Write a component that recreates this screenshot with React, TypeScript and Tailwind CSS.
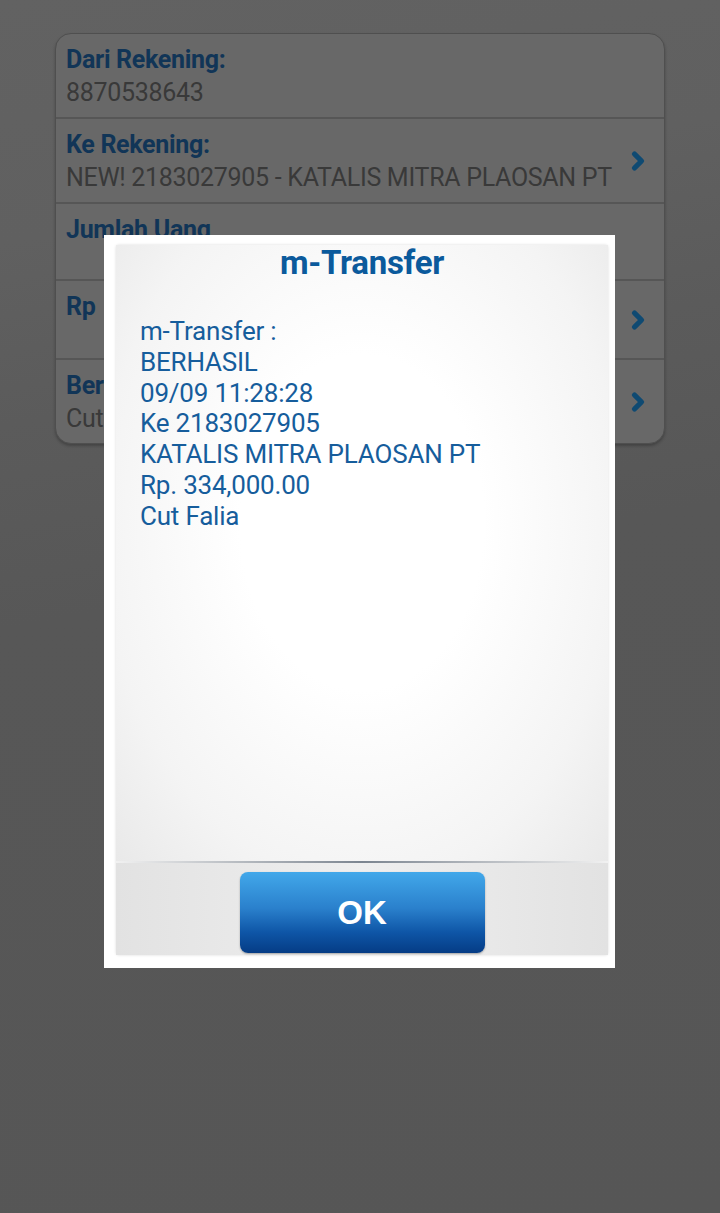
import { ChevronRight } from 'lucide-react'

const rows = [
  { label: 'Dari Rekening:', value: '8870538643', arrow: false, h: 'h-[83px]' },
  { label: 'Ke Rekening:', value: 'NEW! 2183027905 - KATALIS MITRA PLAOSAN PT', arrow: true, h: 'h-[85px]' },
  { label: 'Jumlah Uang', value: '', arrow: false, h: 'h-[77px]' },
  { label: 'Rp', value: '', arrow: true, h: 'h-[79px]' },
  { label: 'Berita', value: 'Cut Falia', arrow: true, h: 'h-[85px]' },
]

const lines = [
  'm-Transfer :',
  'BERHASIL',
  '09/09 11:28:28',
  'Ke 2183027905',
  'KATALIS MITRA PLAOSAN PT',
  'Rp. 334,000.00',
  'Cut Falia',
]

export default function App() {
  return (
    <div
      className="relative min-h-[1213px] w-[720px] overflow-hidden bg-[#575757] bg-[linear-gradient(170deg,#626262_0px,#606060_240px,#5b5b5b_420px,#575757_620px,#565656_100%)] pt-[33px] font-['Roboto',sans-serif]"
    >
      {/* Dimmed form behind the dialog */}
      <div className="mx-[55px] overflow-hidden rounded-[16px] border border-[#4f4f4f] bg-[#686868] shadow-[0_2px_3px_rgba(0,0,0,0.25)]">
        {rows.map((row, i) => (
          <div
            key={row.label}
            className={`flex items-center ${row.h} pl-[10px] pr-[12px] ${i > 0 ? 'border-t-2 border-[#565656]' : ''}`}
          >
            <div className="flex min-w-0 flex-1 flex-col self-start pt-[9px]">
              <span className="text-[25px] leading-[33px] font-bold tracking-[-0.3px] text-[#113557]">
                {row.label}
              </span>
              {row.value && (
                <span className="whitespace-nowrap text-[25px] leading-[33px] tracking-[-0.3px] text-[#393939]">
                  {row.value}
                </span>
              )}
            </div>
            {row.arrow && (
              <ChevronRight className="h-[28px] w-[28px] text-[#0f4a72]" strokeWidth={4.5} />
            )}
          </div>
        ))}
      </div>

      {/* Result dialog */}
      <div className="absolute top-[235px] left-[104px] flex h-[733px] w-[511px] bg-white pt-[10px] pr-[7px] pb-[13px] pl-[12px]">
        <div className="flex flex-1 flex-col rounded-[3px] bg-[#f1f1f1] shadow-[0_0_3px_rgba(0,0,0,0.15)]">
          <div className="flex flex-1 flex-col bg-[radial-gradient(ellipse_at_50%_45%,#ffffff_35%,#f4f4f4_75%,#e9e9e9_100%)]">
            <h2 className="text-center text-[33px] leading-[36px] font-bold tracking-[-0.3px] text-[#0b5a9c]">
              m-Transfer
            </h2>
            <div className="mt-[35px] pl-[24px] text-[26px] leading-[30.8px] tracking-[-0.2px] text-[#165d9c]">
              {lines.map((l) => (
                <div key={l}>{l}</div>
              ))}
            </div>
          </div>
          <div className="h-[2px] bg-[linear-gradient(to_right,rgba(120,130,140,0)_0%,#7c8590_50%,rgba(120,130,140,0)_100%)]" />
          <div className="flex h-[92px] items-start justify-center bg-[linear-gradient(to_right,#e2e2e2,#efefef_50%,#e2e2e2)] pt-[9px]">
            <button className="flex h-[81px] w-[245px] items-center justify-center rounded-[8px] bg-[linear-gradient(to_bottom,#42a8ea_0%,#2a80cc_45%,#0e55a6_75%,#053c85_100%)] font-['Liberation_Sans',Arial,sans-serif] text-[33px] font-bold text-white shadow-[0_1px_2px_rgba(0,0,0,0.3)]">
              OK
            </button>
          </div>
        </div>
      </div>
    </div>
  )
}
